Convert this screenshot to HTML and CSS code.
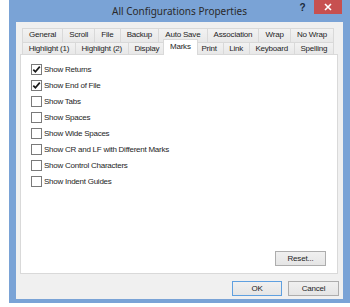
FILE: index.html
```html
<!DOCTYPE html>
<html>
<head>
<meta charset="utf-8">
<link rel="stylesheet" href="styles.css">
</head>
<body>
<div class="window">
  <div class="titlebar">
    <div class="title">All Configurations Properties</div>
    <div class="help">?</div>
    <div class="close">
      <svg width="8" height="8" viewBox="0 0 8 8"><path d="M1 1 L7 7 M7 1 L1 7" stroke="#fff" stroke-width="1.6"/></svg>
    </div>
  </div>
  <div class="client">
    <div class="tabs">
      <div class="tabrow">
        <div class="tab">General</div>
        <div class="tab">Scroll</div>
        <div class="tab">File</div>
        <div class="tab">Backup</div>
        <div class="tab">Auto Save</div>
        <div class="tab">Association</div>
        <div class="tab">Wrap</div>
        <div class="tab">No Wrap</div>
      </div>
      <div class="tabrow front">
        <div class="tab">Highlight (1)</div>
        <div class="tab">Highlight (2)</div>
        <div class="tab">Display</div>
        <div class="tab selected">Marks</div>
        <div class="tab">Print</div>
        <div class="tab">Link</div>
        <div class="tab">Keyboard</div>
        <div class="tab">Spelling</div>
      </div>
    </div>
    <div class="panel">
      <div class="checks">
        <label class="check"><span class="box"><svg width="9" height="9" viewBox="0 0 9 9"><path d="M1.3 4.6 L3.4 6.8 L7.8 1.6" fill="none" stroke="#1a1a1a" stroke-width="1.7"/></svg></span><span>Show Returns</span></label>
        <label class="check"><span class="box"><svg width="9" height="9" viewBox="0 0 9 9"><path d="M1.3 4.6 L3.4 6.8 L7.8 1.6" fill="none" stroke="#1a1a1a" stroke-width="1.7"/></svg></span><span>Show End of File</span></label>
        <label class="check"><span class="box"></span><span>Show Tabs</span></label>
        <label class="check"><span class="box"></span><span>Show Spaces</span></label>
        <label class="check"><span class="box"></span><span>Show Wide Spaces</span></label>
        <label class="check"><span class="box"></span><span>Show CR and LF with Different Marks</span></label>
        <label class="check"><span class="box"></span><span>Show Control Characters</span></label>
        <label class="check"><span class="box"></span><span>Show Indent Guides</span></label>
      </div>
      <div class="reset-row"><div class="btn reset">Reset...</div></div>
    </div>
    <div class="footer">
      <div class="btn default">OK</div>
      <div class="btn">Cancel</div>
    </div>
  </div>
</div>
</body>
</html>
```

FILE: styles.css
```css
html, body {
  margin: 0;
  padding: 0;
  background: #ffffff;
}
body {
  width: 350px;
  height: 307px;
  overflow: hidden;
  font-family: "Liberation Sans", Arial, sans-serif;
}
.window {
  margin-left: 9px;
  width: 341px;
  height: 303px;
  background: #7aa3d6;
  display: flex;
  flex-direction: column;
}
.titlebar {
  height: 22px;
  display: flex;
  align-items: flex-start;
  flex: none;
}
.title {
  flex: 1;
  margin-left: 55px;
  text-align: center;
  font-family: "Noto Sans", sans-serif;
  font-size: 10px;
  line-height: 22px;
  color: #2a2a2a;
}
.help {
  width: 15px;
  text-align: center;
  margin-right: 4px;
  font-family: "Liberation Sans", sans-serif;
  font-weight: bold;
  font-size: 10px;
  line-height: 16px;
  color: #1c2a3a;
}
.close {
  width: 28px;
  height: 14px;
  margin-right: 8px;
  background: #c75050;
  display: flex;
  align-items: center;
  justify-content: center;
}
.close svg { display: block; }
.client {
  flex: 1;
  margin: 0 7px 4px 7px;
  background: #f0f0f0;
  display: flex;
  flex-direction: column;
  padding: 6px 5px 0 4px;
}
.tabs {
  margin: 0 4px 0 2px;
  display: flex;
  flex-direction: column;
}
.tabrow {
  display: flex;
  height: 14px;
  padding-left: 1px;
}
.tabrow.front {
  height: 12px;
}
.tab {
  flex: 1 1 auto;
  margin-left: -1px;
  border: 1px solid #d9d9d9;
  border-bottom: none;
  background: linear-gradient(#f2f2f2, #e8e8e8);
  font-size: 8px;
  letter-spacing: -0.2px;
  color: #1e1e1e;
  text-align: center;
  line-height: 12px;
  padding: 0 3px;
  white-space: nowrap;
  box-sizing: border-box;
}
.front .tab {
  line-height: 11px;
}
.tab.selected {
  position: relative;
  z-index: 1;
  background: #ffffff;
  margin: -3px -2px -1px -3px;
  height: 16px;
  line-height: 14px;
  flex-grow: 0;
  padding: 0 6px;
}
.panel {
  height: 220px;
  box-sizing: border-box;
  border: 1px solid #d9d9d9;
  background: #ffffff;
  display: flex;
  flex-direction: column;
}
.checks {
  padding: 6px 0 0 10px;
  display: flex;
  flex-direction: column;
}
.check {
  display: flex;
  align-items: center;
  height: 16px;
  gap: 2px;
  font-size: 8px;
  letter-spacing: -0.25px;
  color: #1e1e1e;
}
.box {
  width: 11px;
  height: 11px;
  box-sizing: border-box;
  border: 1px solid #7a7a7a;
  background: #fff;
  display: flex;
  align-items: center;
  justify-content: center;
}
.box svg { display: block; }
.reset-row {
  margin-top: auto;
  display: flex;
  justify-content: flex-end;
  padding: 0 11px 7px 0;
}
.btn {
  width: 51px;
  height: 15px;
  box-sizing: border-box;
  border: 1px solid #adadad;
  background: linear-gradient(#f0f0f0, #e5e5e5);
  font-size: 8px;
  letter-spacing: -0.2px;
  color: #1e1e1e;
  text-align: center;
  line-height: 13px;
}
.btn.default {
  border-color: #5fa0e0;
  width: 50px;
}
.footer {
  display: flex;
  justify-content: flex-end;
  gap: 6px;
  padding: 7px 0 0 0;
  margin-right: -1px;
}
```
